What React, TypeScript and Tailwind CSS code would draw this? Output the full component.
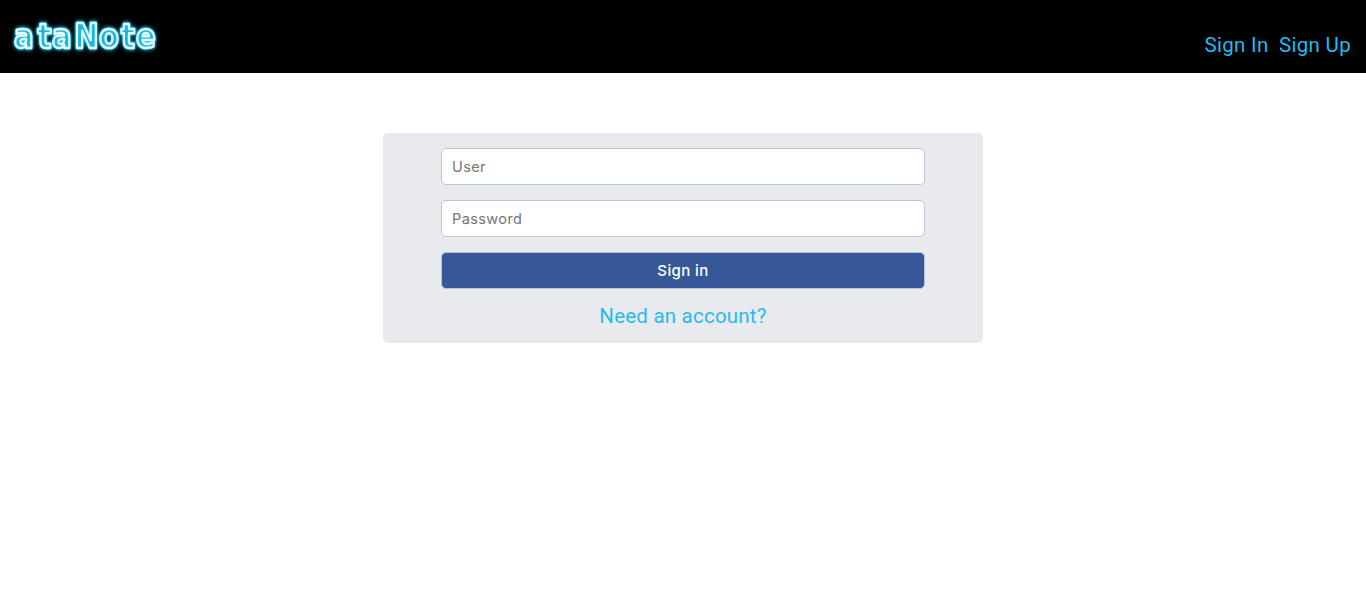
function Logo() {
  return (
    <svg width="170" height="72" viewBox="0 0 170 72" role="img" aria-label="ataNote" className="block shrink-0">
      <text
        x="16 42.5 59.2 84.5 112.5 137.5 154.5"
        y="48.5"
        transform="scale(0.88 1)"
        fontSize="33"
        fontWeight="700"
        fill="#18b8e2"
        stroke="#e2faff"
        strokeWidth="2.5"
        strokeLinejoin="round"
        className="font-['DejaVu_Sans',sans-serif] [filter:drop-shadow(0_0_1px_#20c8f0)_drop-shadow(0_0_2px_#10b4dc)]"
      >
        ataNote
      </text>
    </svg>
  );
}

const field =
  "block h-[37px] w-full rounded-[5px] border border-[#b9c3d9] bg-white px-[10px] font-['Inter',sans-serif] text-[14.5px] tracking-[0.4px] text-[#333] placeholder:text-[#757575] outline-none";

export default function App() {
  return (
    <div className="min-h-[613px] bg-white font-['Roboto',sans-serif]">
      <header className="flex h-[73px] items-start justify-between bg-black pr-[15px]">
        <Logo />
        <nav className="flex gap-[10.5px] pt-[30px] text-[20.5px] leading-[30px] text-[#1dbcf2]">
          <a href="#" className="tracking-[0.3px]">Sign In</a>
          <a href="#" className="tracking-[0.3px]">Sign Up</a>
        </nav>
      </header>
      <main className="flex justify-center pt-[60px]">
        <form className="flex h-[210px] w-[600px] flex-col items-center gap-[15px] rounded-[5px] bg-[#e9eaee] px-[58px] pt-[15px]">
          <input className={field} placeholder="User" />
          <input className={field} type="password" placeholder="Password" />
          <button
            type="button"
            className="h-[37px] w-full shrink-0 rounded-[5px] border border-[#b9c3d9] bg-[#365899] pt-px font-['Inter',sans-serif] text-[15px] font-medium tracking-[0.4px] text-white"
          >
            Sign in
          </button>
          <a href="#" className="-mt-[3px] text-[20.5px] leading-[30px] tracking-[0.22px] text-[#27bbed]">
            Need an account?
          </a>
        </form>
      </main>
    </div>
  );
}
